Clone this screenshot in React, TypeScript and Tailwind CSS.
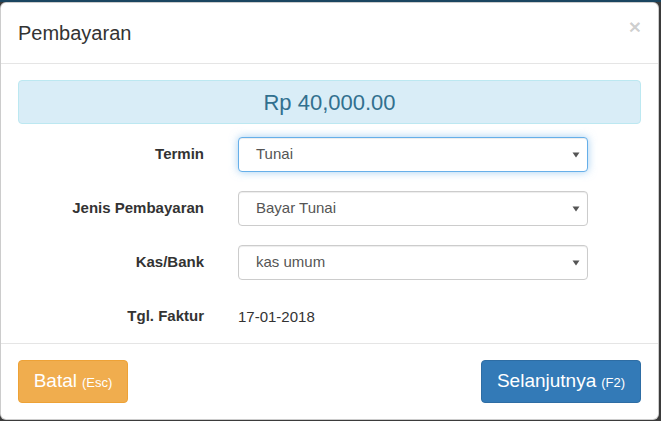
import React from 'react';

const font = { fontFamily: '"Liberation Sans", Arial, sans-serif' };

function Caret() {
  return (
    <svg width="8" height="6" viewBox="0 0 8 6" className="absolute right-[7px] top-1/2 -translate-y-1/2">
      <path d="M0.5 0.5 L7.5 0.5 L4 5.5 Z" fill="#555" />
    </svg>
  );
}

function SelectBox({ value, focused }: { value: string; focused?: boolean }) {
  return (
    <div
      className={`relative flex items-center w-[350px] h-[35px] rounded-[4px] bg-white pl-[17px] text-[15px] text-[#555] border ${
        focused
          ? 'border-[#66afe9] shadow-[inset_0_1px_1px_rgba(0,0,0,0.075),0_0_8px_rgba(102,175,233,0.6)]'
          : 'border-[#ccc] shadow-[inset_0_1px_1px_rgba(0,0,0,0.075)]'
      }`}
    >
      {value}
      <Caret />
    </div>
  );
}

function Row({ label, children }: { label: string; children: React.ReactNode }) {
  return (
    <div className="flex items-center h-[35px]">
      <div className="w-[186px] text-right text-[15px] font-bold text-[#333]">{label}</div>
      <div className="ml-[34px]">{children}</div>
    </div>
  );
}

export default function App() {
  return (
    <div className="w-[661px] h-[421px] bg-[#3b3b3b] overflow-hidden" style={font}>
      <div className="h-[2px] bg-[#1a4560]" />
      <div className="w-[659px] h-[418px] bg-white rounded-[6px] border border-black/20 flex flex-col">
        {/* header */}
        <div className="h-[61px] shrink-0 flex items-center justify-between pl-[17px] pr-[17px] border-b border-[#e5e5e5]">
          <h4 className="text-[20px] text-[#333] leading-none">Pembayaran</h4>
          <span className="text-[21px] font-bold text-black/20 leading-none -mt-[14px]">×</span>
        </div>

        {/* body */}
        <div className="flex-1 px-[17px] pt-[16px]">
          <div className="h-[44px] rounded-[4px] bg-[#d9edf7] border border-[#bce8f1] text-[#31708f] text-[22px] flex items-center justify-center pt-[1px]">
            Rp 40,000.00
          </div>
          <div className="mt-[13px] flex flex-col gap-[19px]">
            <Row label="Termin">
              <SelectBox value="Tunai" focused />
            </Row>
            <Row label="Jenis Pembayaran">
              <SelectBox value="Bayar Tunai" />
            </Row>
            <Row label="Kas/Bank">
              <SelectBox value="kas umum" />
            </Row>
            <Row label="Tgl. Faktur">
              <span className="text-[15px] text-[#333]">17-01-2018</span>
            </Row>
          </div>
        </div>

        {/* footer */}
        <div className="h-[76px] shrink-0 border-t border-[#e5e5e5] flex items-center justify-between px-[17px]">
          <button className="h-[43px] w-[110px] rounded-[4px] bg-[#f0ad4e] border border-[#eea236] text-white text-[19px] flex items-center justify-center">
            Batal<span className="text-[13px] ml-[5px] mt-[3px]">(Esc)</span>
          </button>
          <button className="h-[43px] w-[160px] rounded-[4px] bg-[#337ab7] border border-[#2e6da4] text-white text-[19px] flex items-center justify-center">
            Selanjutnya<span className="text-[13px] ml-[5px] mt-[3px]">(F2)</span>
          </button>
        </div>
      </div>
    </div>
  );
}
